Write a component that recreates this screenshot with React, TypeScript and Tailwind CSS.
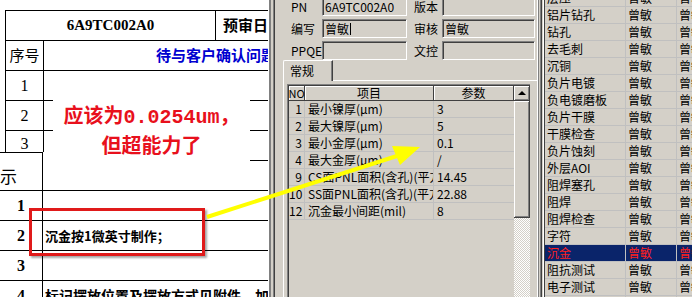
const specRows = [
  ['1', '最小镍厚(μm)', '3'],
  ['2', '最大镍厚(μm)', '5'],
  ['3', '最小金厚(μm)', '0.1'],
  ['4', '最大金厚(μm)', '/'],
  ['9', 'CS面PNL面积(含孔)(平方米)', '14.45'],
  ['10', 'SS面PNL面积(含孔)(平方米)', '22.88'],
  ['12', '沉金最小间距(mil)', '8'],
];

const steps = [
  '层压', '铝片钻孔', '钻孔', '去毛刺', '沉铜', '负片电镀', '负电镀磨板', '负片干膜', '干膜检查',
  '负片蚀刻', '外层AOI', '阻焊塞孔', '阻焊', '阻焊检查', '字符', '沉金', '阻抗测试', '电子测试', '',
];

function LeftDoc() {
  return (
    <div className="relative w-[268px] shrink-0 overflow-hidden bg-white text-black">
      <div className="h-[10px]" />
      <div className="ml-[5px] border-l border-black">
        <div className="flex h-[30px] border-t border-black">
          <div className="flex w-[210px] shrink-0 items-center justify-center border-r border-black font-['Liberation_Serif',serif] text-[15px] font-bold">
            6A9TC002A0
          </div>
          <div className="flex items-center whitespace-nowrap pl-[7px] text-[15px] font-bold">预审日期</div>
        </div>
        <div className="flex h-[30px] border-t border-black">
          <div className="flex w-[38px] shrink-0 items-center justify-center border-r border-black text-[15px]">序号</div>
          <div className="flex items-center whitespace-nowrap pl-[112px] text-[15px] font-bold text-[#0000d0]">待与客户确认问题</div>
        </div>
        {['1', '2'].map((n) => (
          <div key={n} className="flex h-[30px] border-t border-black">
            <div className="flex w-[38px] shrink-0 items-center justify-center border-r border-black font-['Liberation_Serif',serif] text-[16px]">
              {n}
            </div>
          </div>
        ))}
        <div className="flex h-[22px] border-t border-black">
          <div className="flex w-[38px] shrink-0 items-center justify-center border-r border-black pt-[5px] font-['Liberation_Serif',serif] text-[16px]">
            3
          </div>
        </div>
      </div>
      <div className="flex h-[38px]">
        <div className="flex w-[43px] shrink-0 items-center border-r border-t border-black pt-[8px] text-[17px]">示</div>
        <div className="flex-1">
          <div className="ml-[207px] mt-[8px] border-t border-black" />
        </div>
      </div>
      {[
        ['1', '', 'text-[13px]'],
        ['2', '沉金按1微英寸制作；', 'text-[13px]'],
        ['3', '', 'text-[13px]'],
        ['4', '标记摆放位置及摆放方式见附件，加工', 'text-[14px]'],
      ].map(([n, t, size]) => (
        <div key={n} className="flex h-[30px] border-t border-black">
          <div className="flex w-[43px] shrink-0 items-center justify-center border-r border-black font-['Liberation_Serif',serif] text-[16px] font-bold">
            {n}
          </div>
          <div className={`flex items-center whitespace-nowrap pl-[2px] font-bold ${size}`}>{t}</div>
        </div>
      ))}

      <div className="absolute left-[53px] top-[72px] flex h-[90px] w-[197px] flex-col items-center bg-white pt-[32px] font-bold text-[#e8101c]">
        <div className="h-[22px] whitespace-nowrap text-[20px] leading-[22px]">
          应该为<span className="font-['Liberation_Mono',monospace]">0.0254um</span>，
        </div>
        <div className="mt-[8px] h-[22px] whitespace-nowrap text-[20px] leading-[22px]">但超能力了</div>
      </div>
      <div className="absolute left-[29px] top-[208px] h-[48px] w-[176px] border-[3px] border-[#e01a1a] shadow-[2px_2px_2px_rgba(0,0,0,0.35)]" />
    </div>
  );
}

function Sunken({ value, caret }: { value: string; caret?: boolean }) {
  return (
    <div className="flex h-full flex-1 items-center overflow-hidden whitespace-nowrap border border-b-white border-l-[#808080] border-r-white border-t-[#808080] pl-[2px] leading-none shadow-[inset_1px_1px_0_#404040]">
      {value}
      {caret ? <span className="ml-px h-[12px] w-px bg-black" /> : null}
    </div>
  );
}

function FieldRow({ l1, v1, l2, v2, caret }: { l1: string; v1: string; l2: string; v2: string; caret?: boolean }) {
  return (
    <div className="flex h-[19px] items-center">
      <div className="w-[45px] shrink-0 pl-[14px] leading-none">{l1}</div>
      <div className="flex h-full w-[85px] shrink-0">
        <Sunken value={v1} caret={caret} />
      </div>
      <div className="w-[35px] shrink-0 pl-[7px] leading-none">{l2}</div>
      <div className="flex h-full w-[93px] shrink-0">
        <Sunken value={v2} />
      </div>
    </div>
  );
}

function MidPanel() {
  return (
    <div className="flex w-[260px] shrink-0 flex-col bg-[#d4d0c8]">
      <div className="-mt-[3px] flex flex-col gap-[3px]">
        <FieldRow l1="PN" v1="6A9TC002A0" l2="版本" v2="" />
        <FieldRow l1="编写" v1="曾敏" caret l2="审核" v2="曾敏" />
        <FieldRow l1="PPQE" v1="" l2="文控" v2="" />
      </div>
      <div className="ml-[6px] flex h-[21px] items-end">
        <div className="flex h-[21px] w-[50px] items-center rounded-tl-[2px] border-l border-r border-t border-l-white border-r-[#404040] border-t-white pl-[6px] leading-none shadow-[inset_-1px_0_0_#808080]">
          常规
        </div>
        <div className="h-px flex-1 bg-white" />
      </div>
      <div className="ml-[6px] flex flex-1 flex-col border-l border-white pl-[3px] pt-[3px]">
        <div className="flex w-[243px] flex-1 border-l border-t border-[#808080]">
          <div className="flex flex-1 border-l border-t border-[#404040]">
            <div className="flex w-[225px] flex-col">
              <div className="flex h-[15px] leading-none">
                <div className="flex w-[16px] items-center justify-center border-b border-r border-[#404040] bg-[#d4d0c8] shadow-[inset_1px_1px_0_#fff] text-[11px]">
                  NO
                </div>
                <div className="flex w-[129px] items-center justify-center border-b border-r border-[#404040] shadow-[inset_1px_1px_0_#fff]">
                  项目
                </div>
                <div className="flex w-[80px] items-center justify-center border-b border-r border-[#404040] shadow-[inset_1px_1px_0_#fff]">
                  参数
                </div>
              </div>
              {specRows.map(([no, item, val]) => (
                <div key={no} className="flex h-[17px] border-b border-[#c0c0c0] leading-[16px]">
                  <div className="w-[16px] shrink-0 border-r border-[#c0c0c0] pr-[2px] text-right">{no}</div>
                  <div className="w-[129px] shrink-0 overflow-hidden whitespace-nowrap border-r border-[#c0c0c0] pl-[3px]">{item}</div>
                  <div className="w-[80px] shrink-0 pl-[3px]">{val}</div>
                </div>
              ))}
            </div>
            <div className="flex w-[16px] flex-col">
              <div className="flex h-[15px] items-center justify-center border-b border-r border-[#404040] shadow-[inset_1px_1px_0_#fff,inset_-1px_-1px_0_#808080]">
                <div className="h-0 w-0 border-x-[4px] border-b-[4px] border-x-transparent border-b-black" />
              </div>
              <div className="h-[117px] border-b border-r border-[#404040] shadow-[inset_1px_1px_0_#fff,inset_-1px_-1px_0_#808080]" />
              <div className="flex-1 bg-[repeating-conic-gradient(#ffffff_0_25%,#d4d0c8_0_50%)] bg-[length:2px_2px]" />
            </div>
          </div>
        </div>
      </div>
    </div>
  );
}

function RightPanel() {
  return (
    <div className="flex-1 overflow-hidden bg-[#d4d0c8]">
      <div className="-mt-[10px]">
        {steps.map((s, i) => {
          const sel = s === '沉金';
          return (
            <div
              key={i}
              className={`flex h-[17px] border-b border-[#c0c0c0] leading-[16px] ${sel ? 'bg-[#0a246a] text-[#ff2020]' : ''}`}
            >
              <div className="w-[81px] shrink-0 border-r border-[#c0c0c0] pl-[2px]">{s}</div>
              <div className="w-[51px] shrink-0 border-r border-[#c0c0c0] pl-[2px]">{s ? '曾敏' : ''}</div>
              <div className="flex-1 whitespace-nowrap pl-[2px]">{s ? '曾敏' : ''}</div>
            </div>
          );
        })}
      </div>
    </div>
  );
}

export default function App() {
  return (
    <div className="relative flex h-[297px] w-[692px] overflow-hidden bg-[#d4d0c8] font-['Noto_Sans_CJK_SC',sans-serif] text-[12px] text-black">
      <LeftDoc />
      <div className="flex shrink-0">
        <div className="w-px bg-white" />
        <div className="w-[2px] bg-[#808080]" />
        <div className="w-[2px] bg-[#d4d0c8]" />
        <div className="w-px bg-[#808080]" />
        <div className="w-px bg-[#404040]" />
        <div className="w-[2px] bg-[#d4d0c8]" />
      </div>
      <MidPanel />
      <div className="flex shrink-0">
        <div className="w-px bg-white" />
        <div className="w-px bg-[#808080]" />
        <div className="w-px bg-[#d4d0c8]" />
        <div className="w-px bg-[#808080]" />
        <div className="w-px bg-[#404040]" />
        <div className="w-px bg-[#d4d0c8]" />
        <div className="w-px bg-white" />
        <div className="w-px bg-[#404040]" />
      </div>
      <RightPanel />
      <svg className="pointer-events-none absolute left-0 top-0" width="692" height="297">
        <line x1="207" y1="217" x2="400" y2="155" stroke="#ffff00" strokeWidth="4" />
        <polygon points="420,147 392,146 400,165" fill="#ffff00" />
      </svg>
    </div>
  );
}
